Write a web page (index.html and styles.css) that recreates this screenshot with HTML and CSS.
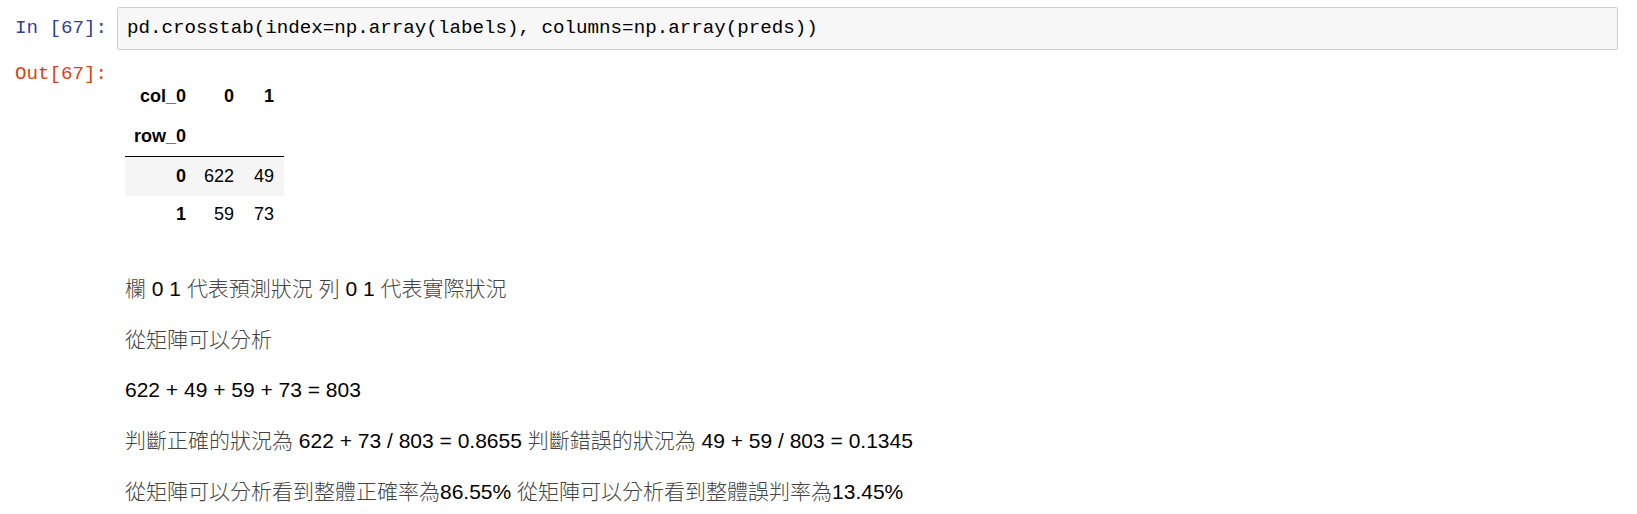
FILE: index.html
```html
<!DOCTYPE html>
<html>
<head>
<meta charset="utf-8">
<link rel="stylesheet" href="styles.css">
</head>
<body>
<div class="notebook">
  <div class="row input-row">
    <div class="prompt in-prompt">In&nbsp;[67]:</div>
    <div class="input-area"><pre class="code">pd.crosstab(index=np.array(labels), columns=np.array(preds))</pre></div>
  </div>
  <div class="row output-row">
    <div class="prompt out-prompt">Out[67]:</div>
    <div class="output-area">
      <table class="df">
        <thead>
          <tr><th>col_0</th><th>0</th><th>1</th></tr>
          <tr class="idx-name"><th>row_0</th><th></th><th></th></tr>
        </thead>
        <tbody>
          <tr class="shaded"><th>0</th><td>622</td><td>49</td></tr>
          <tr><th>1</th><td>59</td><td>73</td></tr>
        </tbody>
      </table>
    </div>
  </div>
  <div class="row md-row">
    <div class="prompt"></div>
    <div class="md">
      <p><span class="cjk">欄</span> 0 1 <span class="cjk">代表預測狀況</span> <span class="cjk">列</span> 0 1 <span class="cjk">代表實際狀況</span></p>
      <p><span class="cjk">從矩陣可以分析</span></p>
      <p>622 + 49 + 59 + 73 = 803</p>
      <p><span class="cjk">判斷正確的狀況為</span> 622 + 73 / 803 = 0.8655 <span class="cjk">判斷錯誤的狀況為</span> 49 + 59 / 803 = 0.1345</p>
      <p><span class="cjk">從矩陣可以分析看到整體正確率為</span>86.55% <span class="cjk">從矩陣可以分析看到整體誤判率為</span>13.45%</p>
    </div>
  </div>
</div>
</body>
</html>
```
FILE: styles.css
```css
html, body {
  margin: 0;
  padding: 0;
  background: #ffffff;
}

.notebook {
  padding-top: 7px;
}

.row {
  display: flex;
  align-items: flex-start;
}

.prompt {
  width: 107px;
  padding-right: 10px;
  flex: 0 0 auto;
  text-align: right;
  font-family: "Liberation Mono", "DejaVu Sans Mono", monospace;
  font-size: 19.2px;
  line-height: 27px;
}

.in-prompt {
  color: #303F9F;
  padding-top: 8px;
}

.out-prompt {
  color: #D84315;
  padding-top: 0;
}

.input-area {
  flex: 0 0 auto;
  width: 1499px;
  height: 41px;
  background: #f7f7f7;
  border: 1px solid #cfcfcf;
  border-radius: 2px;
  box-sizing: content-box;
}

.code {
  margin: 0;
  padding: 7px 0 0 9px;
  font-family: "Liberation Mono", "DejaVu Sans Mono", monospace;
  font-size: 19.2px;
  line-height: 27px;
  color: #000;
}

.output-row {
  margin-top: 11px;
}

.output-area {
  padding-left: 8px;
  padding-top: 16px;
}

.df {
  border-collapse: collapse;
  border-spacing: 0;
  font-family: "Liberation Sans", Arial, sans-serif;
  font-size: 18px;
  color: #000;
}

.df th, .df td {
  text-align: right;
  padding: 0 9px;
  height: 39.5px;
  vertical-align: middle;
  font-weight: normal;
}

.df tbody th, .df tbody td {
  height: 38.5px;
}

.df th:last-child, .df td:last-child {
  padding-right: 10px;
  padding-left: 11px;
}

.df thead th {
  font-weight: bold;
}

.df tbody th {
  font-weight: bold;
}

.df thead tr.idx-name th {
  border-bottom: 1px solid #000;
}

.df tr.shaded {
  background: #f5f5f5;
}

.md-row {
  margin-top: 39px;
}

.md {
  padding-left: 8px;
  display: flex;
  flex-direction: column;
  gap: 20.5px;
}

.md p {
  margin: 0;
  font-family: "Liberation Sans", Arial, sans-serif;
  font-size: 21px;
  line-height: 29.5px;
  color: #000;
  white-space: nowrap;
}

.cjk {
  font-family: "Noto Sans CJK TC", "Noto Sans CJK SC", sans-serif;
  font-weight: 300;
  color: #444;
}
```
